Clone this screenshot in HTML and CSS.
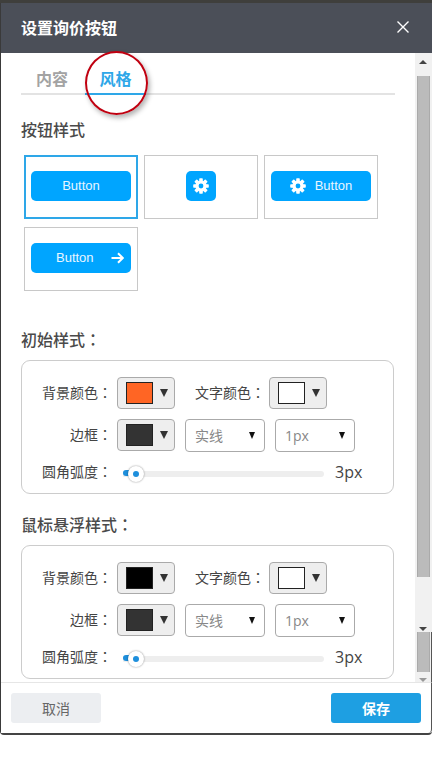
FILE: index.html
```html
<!DOCTYPE html>
<html lang="zh-CN">
<head>
<meta charset="utf-8">
<title>设置询价按钮</title>
<link rel="stylesheet" href="styles.css">
</head>
<body>
<svg class="defs" width="0" height="0" aria-hidden="true">
  <symbol id="gear" viewBox="0 0 16 16">
    <g fill="#fff">
      <rect x="6.2" y="0.2" width="3.6" height="15.6" rx="0.8"/>
      <rect x="6.2" y="0.2" width="3.6" height="15.6" rx="0.8" transform="rotate(45 8 8)"/>
      <rect x="6.2" y="0.2" width="3.6" height="15.6" rx="0.8" transform="rotate(90 8 8)"/>
      <rect x="6.2" y="0.2" width="3.6" height="15.6" rx="0.8" transform="rotate(135 8 8)"/>
      <circle cx="8" cy="8" r="5.6"/>
    </g>
    <circle cx="8" cy="8" r="2.4" fill="#00a5ff"/>
  </symbol>
</svg>
<div class="top-strip"></div>
<div class="dialog">
  <header class="dialog-head">
    <h1 class="dialog-title">设置询价按钮</h1>
    <svg class="close" width="14" height="14" viewBox="0 0 14 14"><path d="M1.5 1.5 12.5 12.5M12.5 1.5 1.5 12.5" stroke="#fff" stroke-width="1.4" fill="none"/></svg>
  </header>
  <div class="dialog-body">
    <main class="content">
      <nav class="tabs">
        <span class="tab">内容</span>
        <span class="tab tab-active">风格</span>
      </nav>
      <h2 class="section-title first">按钮样式</h2>
      <div class="cards">
        <div class="card card-selected"><div class="demo"><span>Button</span></div></div>
        <div class="card"><div class="demo demo-icon"><svg width="16" height="16"><use href="#gear"/></svg></div></div>
        <div class="card"><div class="demo demo-gear"><svg width="16" height="16"><use href="#gear"/></svg><span>Button</span></div></div>
        <div class="card"><div class="demo demo-arrow"><span>Button</span><svg width="13" height="12" viewBox="0 0 13 12"><path d="M0.5 6H11.5M7 1.2 11.8 6 7 10.8" stroke="#fff" stroke-width="2" fill="none"/></svg></div></div>
      </div>
      <h2 class="section-title second">初始样式<span class="colon" lang="zh-TW">：</span></h2>
      <section class="panel">
        <div class="row">
          <span class="label">背景颜色<span class="colon" lang="zh-TW">：</span></span>
          <div class="picker"><i class="swatch orange"></i><i class="caret"></i></div>
          <span class="label label-b">文字颜色<span class="colon" lang="zh-TW">：</span></span>
          <div class="picker"><i class="swatch white"></i><i class="caret"></i></div>
        </div>
        <div class="row">
          <span class="label">边框<span class="colon" lang="zh-TW">：</span></span>
          <div class="picker"><i class="swatch dark"></i><i class="caret"></i></div>
          <div class="select"><span>实线</span><i class="caret small"></i></div>
          <div class="select"><span class="latin">1px</span><i class="caret small"></i></div>
        </div>
        <div class="row row-slider">
          <span class="label">圆角弧度<span class="colon" lang="zh-TW">：</span></span>
          <div class="slider"><i class="fill"></i><i class="thumb"></i></div>
          <span class="value">3px</span>
        </div>
      </section>
      <h2 class="section-title third">鼠标悬浮样式<span class="colon" lang="zh-TW">：</span></h2>
      <section class="panel">
        <div class="row">
          <span class="label">背景颜色<span class="colon" lang="zh-TW">：</span></span>
          <div class="picker"><i class="swatch black"></i><i class="caret"></i></div>
          <span class="label label-b">文字颜色<span class="colon" lang="zh-TW">：</span></span>
          <div class="picker"><i class="swatch white"></i><i class="caret"></i></div>
        </div>
        <div class="row">
          <span class="label">边框<span class="colon" lang="zh-TW">：</span></span>
          <div class="picker"><i class="swatch dark"></i><i class="caret"></i></div>
          <div class="select"><span>实线</span><i class="caret small"></i></div>
          <div class="select"><span class="latin">1px</span><i class="caret small"></i></div>
        </div>
        <div class="row row-slider">
          <span class="label">圆角弧度<span class="colon" lang="zh-TW">：</span></span>
          <div class="slider"><i class="fill"></i><i class="thumb"></i></div>
          <span class="value">3px</span>
        </div>
      </section>
    </main>
    <aside class="scrollbars">
      <div class="bar bar-inner">
        <i class="arrow up"></i>
        <i class="bar-thumb thumb-a"></i>
        <i class="arrow down"></i>
      </div>
      <div class="bar bar-outer">
        <i class="bar-thumb thumb-b"></i>
        <i class="arrow down faint"></i>
      </div>
    </aside>
    <div class="ring"></div>
  </div>
  <footer class="dialog-foot">
    <button class="btn btn-cancel">取消</button>
    <button class="btn btn-save">保存</button>
  </footer>
</div>
</body>
</html>
```
FILE: styles.css
```css
* { box-sizing: border-box; }
html, body { margin: 0; padding: 0; background: #fff; }
body {
  width: 432px;
  height: 764px;
  overflow: hidden;
  font-family: "Noto Sans CJK SC", "Liberation Sans", sans-serif;
  color: #444;
}
i { display: block; }
.defs { position: absolute; }
.colon { font-family: "Noto Sans CJK TC", sans-serif; }
.top-strip { height: 3px; background: #3f3f3c; }
.dialog {
  width: 432px;
  height: 732px;
  display: flex;
  flex-direction: column;
  background: #fff;
  border-left: 1px solid #3a3a3a;
  border-bottom: 2px solid #444;
  border-radius: 0 0 4px 4px;
}
.dialog-head {
  height: 50px;
  flex: none;
  display: flex;
  align-items: center;
  justify-content: space-between;
  padding: 0 22px 0 20px;
  background: #4b4f58;
}
.dialog-title { margin: 0 0 3px; font-size: 16px; line-height: 24px; font-weight: 700; color: #fff; }
.close { margin-bottom: 3px; }
.dialog-body { position: relative; flex: 1; display: flex; min-height: 0; }
.content { flex: 1; min-width: 0; overflow: hidden; padding: 0 20px; }
.tabs {
  height: 42px;
  display: flex;
  padding-top: 13px;
  border-bottom: 2px solid #e3e3e3;
}
.tab { width: 62px; height: 27px; text-align: center; font-size: 16px; line-height: 24px; font-weight: 700; color: #a3a3a3; }
.tab-active { width: 61px; margin-left: 2px; color: #2ea7e8; border-bottom: 2px solid #2ea7e8; height: 29px; }
.section-title { margin: 0; font-size: 16px; line-height: 24px; font-weight: 500; color: #4a4a4a; }
.first { margin-top: 22px; }
.cards { display: flex; flex-wrap: wrap; gap: 8px 6px; width: 360px; margin: 14px 0 0 3px; }
.second { margin-top: 36px; }
.third { margin-top: 18px; }
.card {
  width: 114px;
  height: 64px;
  border: 1px solid #c8c8c8;
  padding: 15px 6px;
}
.card-selected { border: 2px solid #2ea7e8; padding: 14px 5px; }
.demo {
  height: 30px;
  width: 100px;
  display: flex;
  align-items: center;
  justify-content: center;
  gap: 9px;
  background: #00a5ff;
  border-radius: 5px;
  font-family: "Liberation Sans", sans-serif;
  font-size: 13px;
  color: #e8f6ff;
}
.demo span { margin-top: -1px; }
.demo-icon { width: 30px; margin-left: 35px; }
.demo-arrow { justify-content: flex-start; gap: 17px; padding-left: 25px; }
.panel {
  width: 373px;
  height: 134px;
  margin-top: 9px;
  padding: 16px 0 0;
  border: 1px solid #ccc;
  border-radius: 9px;
}
.row { display: flex; align-items: center; height: 32px; margin-bottom: 10px; }
.row-slider { height: 28px; margin-top: -1px; }
.label { width: 90px; flex: none; text-align: right; font-size: 14px; line-height: 20px; color: #444; margin-top: -2px; }
.row-slider .label { margin-top: -6px; }
.label-b { width: 70px; margin-left: 20px; margin-right: 4px; }
.picker {
  width: 58px;
  height: 32px;
  margin-left: 5px;
  flex: none;
  display: flex;
  align-items: center;
  padding-left: 8px;
  gap: 7px;
  background: #eee;
  border: 1px solid #aaa;
  border-radius: 4px;
}
.label-b + .picker { margin-left: 0; }
.swatch { width: 27px; height: 22px; border: 1px solid #222; }
.orange { background: #ff6524; }
.white { background: #fff; }
.dark { background: #333; }
.black { background: #000; }
.caret { width: 0; height: 0; border-left: 4px solid transparent; border-right: 4px solid transparent; border-top: 8px solid #333; }
.caret.small { border-left-width: 3.5px; border-right-width: 3.5px; border-top: 7px solid #111; }
.select {
  width: 80px;
  height: 33px;
  margin-left: 10px;
  flex: none;
  display: flex;
  align-items: center;
  justify-content: space-between;
  padding: 0 9px;
  background: #fff;
  border: 1px solid #aaa;
  border-radius: 4px;
  font-size: 14px;
  color: #888;
}
.latin { font-family: "Open Sans", sans-serif; font-size: 14px; }
.slider { position: relative; width: 201px; height: 6px; margin-left: 11px; flex: none; background: #eee; border-radius: 1px 3px 3px 1px; }
.fill { width: 10px; height: 6px; background: #1e8fdc; border-radius: 3px 0 0 3px; margin-top: -1px; }
.thumb {
  position: absolute;
  left: 5px;
  top: -5px;
  width: 16px;
  height: 16px;
  background: #fff;
  border-radius: 50%;
  border: 5px solid #fff;
  box-shadow: 0 0 2px rgba(0,0,0,.45);
}
.thumb::after { content: ""; display: block; width: 6px; height: 6px; border-radius: 50%; background: #1e8fdc; }
.value { margin: -4px 0 0 11px; font-family: "Open Sans", sans-serif; font-size: 16px; color: #444; }
.scrollbars { width: 17px; flex: none; display: flex; flex-direction: column; background: #f1f1f1; }
.bar { position: relative; display: flex; flex-direction: column; align-items: stretch; padding: 0 2px; }
.bar-inner { height: 579px; padding-top: 23px; }
.bar-outer { height: 50px; padding-right: 1px; border-right: 1px solid #555; }
.bar-thumb { background: #bbb; border: 1px solid #aaa; border-width: 0 1px; }
.thumb-a { height: 501px; }
.thumb-b { height: 40px; }
.arrow { position: absolute; left: 4px; width: 0; height: 0; border-left: 4px solid transparent; border-right: 4px solid transparent; }
.up { top: 7px; border-bottom: 4px solid #444; }
.down { bottom: 1px; border-top: 4px solid #444; }
.faint { bottom: 0; border-top-color: #999; }
.ring {
  position: absolute;
  left: 84px;
  top: -2px;
  width: 63px;
  height: 64px;
  border: 2px solid #c00010;
  border-radius: 50%;
  box-shadow: 2px 3px 5px rgba(0,0,0,.3);
  pointer-events: none;
}
.dialog-foot {
  height: 51px;
  flex: none;
  display: flex;
  justify-content: space-between;
  align-items: flex-start;
  padding: 10px 10px 0;
  background: #fff;
  border-top: 1px solid #e6e6e6;
  border-right: 1px solid #555;
  border-radius: 0 0 4px 0;
}
.btn { width: 90px; height: 30px; border: 0; border-radius: 3px; font-family: "Noto Sans CJK SC", sans-serif; font-size: 14px; padding: 0; }
.btn-cancel { background: #eceef1; color: #666; }
.btn-save { background: #1e9fe2; color: #fff; font-weight: 700; }
```
